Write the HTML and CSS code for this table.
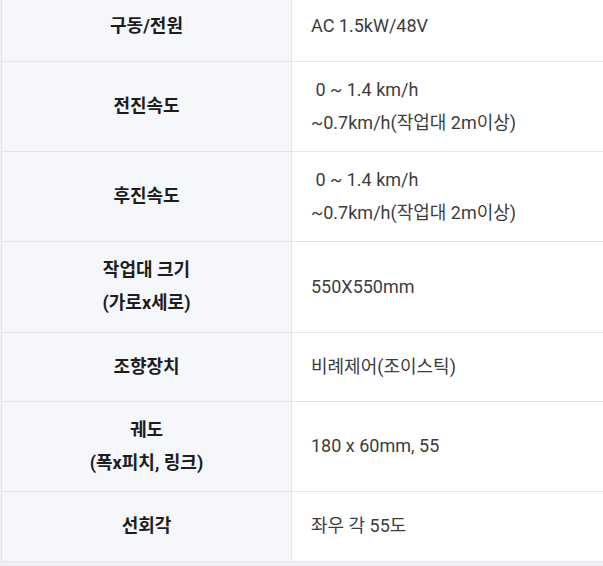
FILE: index.html
```html
<!DOCTYPE html>
<html lang="ko">
<head>
<meta charset="utf-8">
<title>사양</title>
<link rel="stylesheet" href="styles.css">
</head>
<body>
<div class="spec">
  <div class="th">구동/전원</div>
  <div class="td">AC 1.5kW/48V</div>

  <div class="th">전진속도</div>
  <div class="td"><span>&nbsp;0 ~ 1.4 km/h</span><span>~0.7km/h(작업대 2m이상)</span></div>

  <div class="th">후진속도</div>
  <div class="td"><span>&nbsp;0 ~ 1.4 km/h</span><span>~0.7km/h(작업대 2m이상)</span></div>

  <div class="th"><span>작업대 크기</span><span>(가로x세로)</span></div>
  <div class="td">550X550mm</div>

  <div class="th">조향장치</div>
  <div class="td">비례제어(조이스틱)</div>

  <div class="th"><span>궤도</span><span>(폭x피치, 링크)</span></div>
  <div class="td">180 x 60mm, 55</div>

  <div class="th">선회각</div>
  <div class="td">좌우 각 55도</div>
</div>
</body>
</html>
```

FILE: styles.css
```css
html, body {
  margin: 0;
  padding: 0;
  overflow: hidden;
}
body {
  background: #f0f1f4;
  font-family: Roboto, "Noto Sans CJK KR", sans-serif;
  font-size: 18px;
}
.spec {
  display: grid;
  grid-template-columns: 290px 1fr;
  width: 601px;
  margin: -8.5px 0 0 1px;
  border-left: 1px solid #e0e3e8;
  border-bottom: 1px solid #e3e5e9;
  background: #fff;
}
.th, .td {
  box-sizing: border-box;
  min-height: 69.5px;
  padding: 12px 19px;
  line-height: 32.6px;
  display: flex;
  flex-direction: column;
  justify-content: center;
  border-top: 1px solid #e3e5e9;
}
.spec > div:nth-child(1), .spec > div:nth-child(2) {
  border-top: none;
}
.th {
  background: #f6f7fa;
  border-right: 1px solid #e3e6ea;
  align-items: center;
  text-align: center;
  font-weight: 700;
  color: #1d1d1f;
}
.td {
  color: #3d3d3d;
  align-items: flex-start;
  white-space: pre;
}
```
